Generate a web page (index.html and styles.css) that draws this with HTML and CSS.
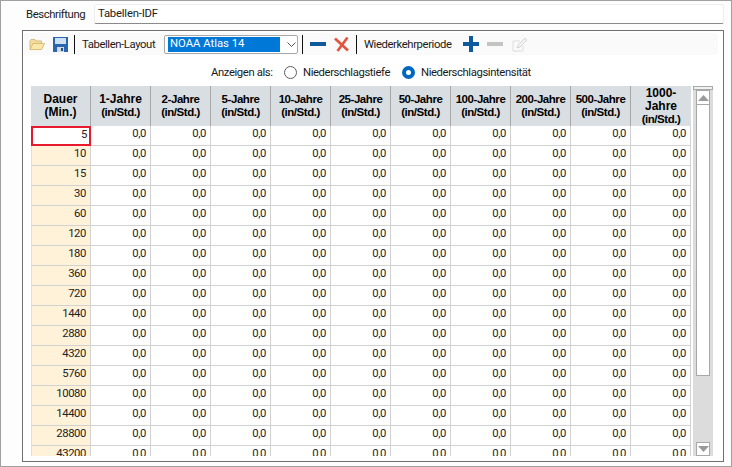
FILE: index.html
```html
<!DOCTYPE html>
<html lang="de">
<head>
<meta charset="utf-8">
<title>Tabellen-IDF</title>
<link rel="stylesheet" href="styles.css">
</head>
<body>
<div class="window">
  <div class="caption-row">
    <label class="caption-label">Beschriftung</label>
    <div class="caption-input">Tabellen-IDF</div>
  </div>
  <div class="group">
    <div class="toolbar">
      <svg class="icon open" width="16" height="13" viewBox="0 0 16 13"><path d="M1 11.5V2.5L2 1.5H6L7 3H12.5V5" fill="#f3dc9c" stroke="#d6bd7c"/><path d="M1 11.5L4 5.5H15.5L12.5 11.5Z" fill="#fbe8a8" stroke="#d8bf78"/></svg>
      <svg class="icon save" width="15" height="15" viewBox="0 0 15 15"><path d="M0 0H15V15H0Z" fill="#2a66b0"/><path d="M2 1H13V7H2Z" fill="#cfe0f2"/><path d="M4 10H11V15H4Z" fill="#d5dbe3"/><path d="M8 11H10V14H8Z" fill="#1d4f8e"/></svg>
      <span class="sep first-sep"></span>
      <span class="tool-label layout-label">Tabellen-Layout</span>
      <div class="combo">
        <span class="combo-value">NOAA Atlas 14</span>
        <svg class="combo-arrow" width="9" height="5" viewBox="0 0 9 5"><path d="M.5.5L4.5 4.5L8.5.5" fill="none" stroke="#555"/></svg>
      </div>
      <span class="sep"></span>
      <svg class="icon minus" width="16" height="4" viewBox="0 0 16 4"><path d="M0 0H16V4H0Z" fill="#0f5a9c"/></svg>
      <svg class="icon cross" width="15" height="15" viewBox="0 0 15 15"><path d="M1 1.5L14 13.5M13.5 .5L3.5 14" fill="none" stroke="#e2533f" stroke-width="2.6"/></svg>
      <span class="sep"></span>
      <span class="tool-label period-label">Wiederkehrperiode</span>
      <svg class="icon plus" width="16" height="16" viewBox="0 0 16 16"><path d="M6 0H10V6H16V10H10V16H6V10H0V6H6Z" fill="#0f5a9c"/></svg>
      <svg class="icon minus-off" width="16" height="4" viewBox="0 0 16 4"><path d="M0 0H16V4H0Z" fill="#c4c4c4"/></svg>
      <svg class="icon edit" width="16" height="15" viewBox="0 0 16 15"><path d="M1 4H8M1 4V14H11V9" fill="none" stroke="#dcdcdc"/><path d="M5 11L6 8L13 1L15 3L8 10Z" fill="#f3f3f3" stroke="#d4d4d4"/></svg>
    </div>
    <div class="display-row">
      <span class="display-label">Anzeigen als:</span>
      <span class="radio"></span>
      <span class="radio-text depth">Niederschlagstiefe</span>
      <span class="radio checked"></span>
      <span class="radio-text">Niederschlagsintensität</span>
    </div>
    <div class="grid-area">
      <div class="grid-clip">
        <table class="grid">
          <thead>
            <tr>
              <th class="first"><span class="loose">Dauer<br>(Min.)</span></th>
              <th><span class="loose">1-Jahre</span><br>(in/Std.)</th>
              <th>2-Jahre<br>(in/Std.)</th>
              <th>5-Jahre<br>(in/Std.)</th>
              <th>10-Jahre<br>(in/Std.)</th>
              <th>25-Jahre<br>(in/Std.)</th>
              <th>50-Jahre<br>(in/Std.)</th>
              <th>100-Jahre<br>(in/Std.)</th>
              <th>200-Jahre<br>(in/Std.)</th>
              <th>500-Jahre<br>(in/Std.)</th>
              <th><span class="loose">1000-<br>Jahre</span><br>(in/Std.)</th>
            </tr>
          </thead>
          <tbody id="rows"></tbody>
        </table>
      </div>
      <div class="scrollbar">
        <div class="scroll-cap"></div>
        <div class="scroll-btn up"><svg width="11" height="6" viewBox="0 0 11 6"><path d="M5.5 0L11 6H0Z" fill="#9a9a9a"/></svg></div>
        <div class="scroll-thumb"></div>
        <div class="scroll-track"></div>
        <div class="scroll-btn down"><svg width="11" height="6" viewBox="0 0 11 6"><path d="M0 0H11L5.5 6Z" fill="#9a9a9a"/></svg></div>
      </div>
    </div>
  </div>
</div>
<script src="app.js"></script>
</body>
</html>
```
FILE: app.js
```js
var durations = [5, 10, 15, 30, 60, 120, 180, 360, 720, 1440, 2880, 4320, 5760, 10080, 14400, 28800, 43200];
var html = '';
durations.forEach(function (d, i) {
  html += '<tr><td class="dur' + (i === 0 ? ' current' : '') + '">' + d + '</td>';
  for (var c = 0; c < 10; c++) html += '<td>0,0</td>';
  html += '</tr>';
});
document.getElementById('rows').innerHTML = html;
```
FILE: styles.css
```css
* { box-sizing: border-box; }
html, body { margin: 0; padding: 0; }
body {
  font-family: Roboto, "Liberation Sans", Arial, sans-serif;
  font-size: 11.3px;
  letter-spacing: -0.4px;
  color: #1a1a1a;
  background: #fff;
  white-space: nowrap;
}
.window {
  width: 732px;
  height: 467px;
  border: 1px solid #a0a0a0;
  background: #fdfdfd;
  padding: 3px 7px 4px 21px;
  display: flex;
  flex-direction: column;
  overflow: hidden;
}
.caption-row { display: flex; align-items: center; height: 20px; }
.caption-label { width: 72px; padding-left: 4px; flex: none; }
.caption-input {
  flex: 1;
  height: 20px;
  line-height: 18px;
  padding-left: 3px;
  letter-spacing: -0.2px;
  background: #fff;
  border: 1px solid #eeeeee;
  border-bottom: 1px solid #8a8a8a;
  border-radius: 2px;
}
.group {
  margin-top: 6px;
  flex: 1;
  min-height: 0;
  border: 1px solid #6f6f6f;
  background: #fff;
  padding: 2px 5px 4px 1px;
  display: flex;
  flex-direction: column;
}
.toolbar {
  height: 22px;
  background: #fafafa;
  display: flex;
  align-items: center;
  flex: none;
  padding-left: 5px;
}
.icon { flex: none; }
.save { margin-left: 8px; }
.sep { width: 1px; height: 19px; background: #111; flex: none; }
.first-sep { margin-left: 6px; }
.tool-label { flex: none; }
.layout-label { margin-left: 7px; width: 75px; }
.combo {
  margin-left: 7px;
  width: 134px;
  height: 19px;
  border: 1px solid #a8a8a8;
  border-radius: 2px;
  background: #fff;
  display: flex;
  align-items: center;
  padding: 1px 0 1px 3px;
  flex: none;
}
.combo-value {
  width: 112px;
  height: 15px;
  line-height: 14px;
  padding-left: 2px;
  letter-spacing: 0;
  background: #0078d7;
  color: #fff;
  flex: none;
}
.combo-arrow { margin-left: 7px; flex: none; }
.combo + .sep { margin-left: 4px; }
.minus { margin-left: 7px; }
.cross { margin-left: 8px; }
.cross + .sep { margin-left: 7px; }
.period-label { margin-left: 7px; width: 90px; }
.plus { margin-left: 9px; }
.minus-off { margin-left: 8px; }
.edit { margin-left: 9px; }
.display-row {
  height: 31px;
  flex: none;
  display: flex;
  align-items: center;
  padding: 4px 0 0 187px;
}
.display-label { width: 62px; flex: none; }
.radio {
  width: 13px;
  height: 13px;
  border-radius: 50%;
  border: 1px solid #5c5c5c;
  background: #fff;
  flex: none;
  margin-left: 11px;
}
.radio.checked { border: 4px solid #0067c0; background: #fff; margin-left: 0; }
.radio-text { margin-left: 6px; }
.radio-text.depth { width: 99px; }
.grid-area { flex: 1; min-height: 0; display: flex; padding: 0 0 0 7px; }
.grid-clip { width: 662px; height: 370px; overflow: hidden; flex: none; }
.grid {
  border-collapse: separate;
  border-spacing: 0;
  table-layout: fixed;
  width: 660px;
}
.grid th {
  width: 60px;
  height: 40px;
  padding: 0;
  background: #d9dee2;
  border-right: 1px solid #a8a8a8;
  font-family: "Liberation Sans", Arial, sans-serif;
  font-weight: bold;
  font-size: 11.5px;
  letter-spacing: -0.45px;
  line-height: 13px;
  text-align: center;
  color: #000;
}
.grid th .loose { font-size: 12px; letter-spacing: 0; }
.grid th:last-child { border-right: 0; }
.grid td {
  width: 60px;
  height: 20px;
  padding: 0 4px 4px 0;
  border-right: 1px solid #d2d2d2;
  border-bottom: 1px solid #d2d2d2;
  text-align: right;
  color: #222;
  background: #fff;
}
.grid td.dur { background: #fff2d9; border-left: 1px solid #dedede; }
.grid td.current { box-shadow: inset 0 0 0 2px #e8192c; background: #fff; border: 0; }
.scrollbar {
  width: 20px;
  height: 370px;
  background: #dcdcdc;
  flex: none;
  display: flex;
  flex-direction: column;
  align-items: center;
}
.scroll-cap { height: 4px; width: 100%; background: #f0f0f0; border: 1px solid #a8a8a8; flex: none; }
.scroll-btn {
  width: 14px;
  height: 15px;
  border: 1px solid #a8a8a8;
  background: #fff;
  flex: none;
  display: flex;
  align-items: center;
  justify-content: center;
}
.scroll-btn.down { height: 14px; }
.scroll-thumb { width: 14px; height: 271px; background: #fff; border: 1px solid #a8a8a8; border-top: 0; flex: none; }
.scroll-track { flex: 1; }
```
